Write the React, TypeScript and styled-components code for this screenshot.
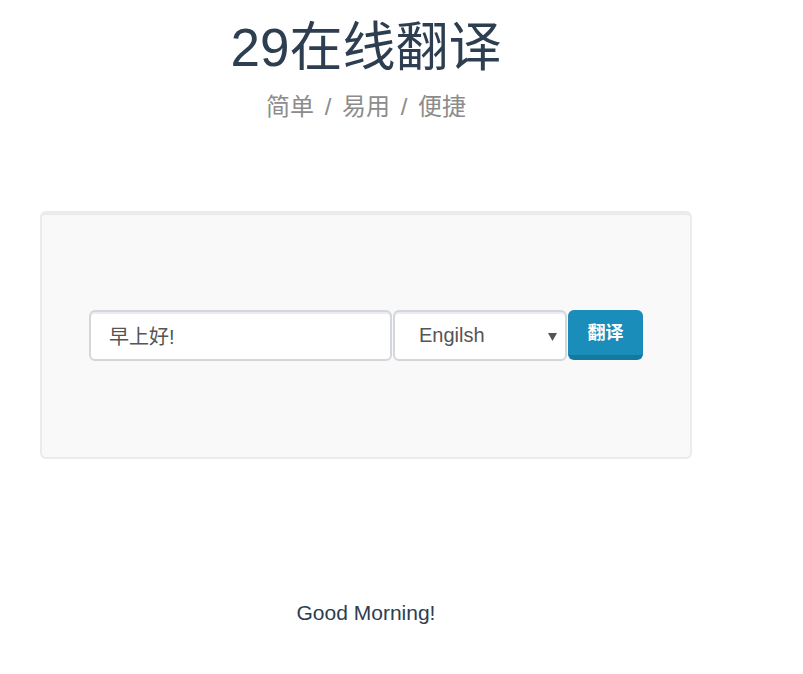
import React from "react";
import styled, { createGlobalStyle } from "styled-components";

const GlobalStyle = createGlobalStyle`
  html, body {
    margin: 0;
    padding: 0;
    background: #ffffff;
  }
  body {
    font-family: "Liberation Sans", "Noto Sans CJK SC", sans-serif;
    color: #2c3e50;
  }
  * { box-sizing: border-box; }
`;

const Page = styled.main`
  width: 652px;
  margin-left: 40px;
  display: flex;
  flex-direction: column;
  align-items: stretch;
`;

const Title = styled.h1`
  margin: 19px 0 0;
  font-size: 53px;
  line-height: 1.1;
  font-weight: 400;
  text-align: center;
  color: #2c3e50;
`;

const Subtitle = styled.p`
  margin: 16px 0 0;
  font-size: 24px;
  line-height: 1.2;
  word-spacing: 4px;
  text-align: center;
  color: #8c8c8c;
`;

const Panel = styled.section`
  margin-top: 89px;
  height: 248px;
  background: #f9f9f9;
  border: 2px solid #ebebeb;
  border-top-width: 4px;
  border-radius: 6px;
  display: flex;
  align-items: center;
  justify-content: center;
`;

const Form = styled.form`
  display: flex;
  align-items: flex-start;
  gap: 1px;
  margin-top: -2px;
`;

const fieldBase = `
  height: 51px;
  border: 2px solid #d3d7dc;
  border-radius: 6px;
  background: #ffffff;
  box-shadow: inset 0 2px 0 #e9ebee;
  font-family: "Liberation Sans", "Noto Sans CJK SC", sans-serif;
  font-size: 20px;
  color: #555555;
  outline: none;
`;

const TextInput = styled.input`
  ${fieldBase}
  width: 303px;
  padding: 0 18px;
`;

const SelectWrap = styled.div`
  position: relative;
  width: 174px;
  height: 51px;
`;

const Select = styled.select`
  ${fieldBase}
  width: 100%;
  padding: 0 24px;
  appearance: none;
  -webkit-appearance: none;
`;

const Arrow = styled.svg`
  position: absolute;
  right: 10px;
  top: 23px;
  width: 9px;
  height: 8px;
  pointer-events: none;
`;

const Button = styled.button`
  width: 75px;
  height: 50px;
  padding: 0 0 2px;
  border: none;
  border-bottom: 5px solid #15789f;
  border-radius: 6px;
  background: #1a8dbb;
  color: #ffffff;
  font-family: "Liberation Sans", "Noto Sans CJK SC", sans-serif;
  font-size: 18px;
  font-weight: 700;
  display: flex;
  align-items: center;
  justify-content: center;
  cursor: pointer;
`;

const Result = styled.p`
  margin: 141px 0 0;
  font-size: 21px;
  line-height: 1.2;
  text-align: center;
  color: #2c3e50;
`;

export default function App() {
  return (
    <>
      <GlobalStyle />
      <Page>
        <Title>29在线翻译</Title>
        <Subtitle>简单 / 易用 / 便捷</Subtitle>
        <Panel>
          <Form onSubmit={(e) => e.preventDefault()}>
            <TextInput type="text" defaultValue="早上好!" />
            <SelectWrap>
              <Select defaultValue="en">
                <option value="en">Engilsh</option>
                <option value="ja">日本語</option>
                <option value="ko">한국어</option>
              </Select>
              <Arrow viewBox="0 0 9 8">
                <polygon points="0,0 9,0 4.5,8" fill="#555555" />
              </Arrow>
            </SelectWrap>
            <Button type="submit">翻译</Button>
          </Form>
        </Panel>
        <Result>Good Morning!</Result>
      </Page>
    </>
  );
}
